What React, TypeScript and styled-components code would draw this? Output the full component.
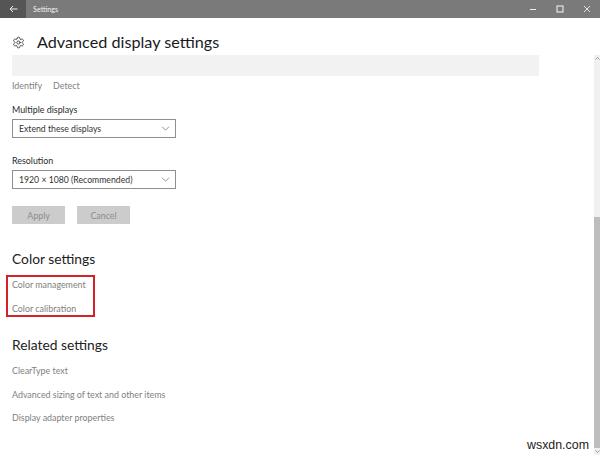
import React from "react";
import styled, { createGlobalStyle } from "styled-components";
import { Settings } from "lucide-react";

const Global = createGlobalStyle`
  html, body { margin: 0; padding: 0; background: #fff; }
  body { width: 600px; height: 455px; overflow: hidden; font-family: Lato, "Noto Sans", sans-serif; }
`;

const Win = styled.div`
  width: 600px; height: 455px; display: flex; flex-direction: column; background: #fff; position: relative; overflow: hidden;
`;
const TitleBar = styled.div`
  height: 18px; background: #7a7a7a; display: flex; align-items: center; color: #f2f2f2; flex: none;
`;
const BackBtn = styled.div`
  width: 26px; height: 18px; background: #555; display: flex; align-items: center; justify-content: center;
`;
const TitleText = styled.span`
  font-size: 7.2px; margin-left: 7px; flex: 1;
`;
const WinBtn = styled.div`
  width: 27px; height: 18px; display: flex; align-items: center; justify-content: center;
`;
const Body = styled.div`
  flex: 1; display: flex; min-height: 0;
`;
const Content = styled.div`
  flex: 1; padding: 0 0 0 12px; display: flex; flex-direction: column; align-items: flex-start;
`;
const Header = styled.div`
  height: 26px; margin-top: 11px; display: flex; align-items: center; gap: 12px;
`;
const PageTitle = styled.h1`
  margin: 0; font-size: 16.2px; font-weight: 400; color: #1a1a1a; line-height: 1;
`;
const Band = styled.div`
  width: 527px; height: 21px; background: #f2f2f2;
`;
const LinkRow = styled.div`
  display: flex; gap: 11px; margin-top: 2px;
`;
const Link = styled.div`
  font-size: 8.9px; line-height: 14px; padding-top: 1px; color: #808080; white-space: nowrap;
`;
const Label = styled.div<{ $top: number }>`
  font-size: 8.9px; line-height: 14px; padding-top: 1px; color: #2b2b2b; margin-top: ${p => p.$top}px;
`;
const Select = styled.div`
  width: 164px; height: 19px; box-sizing: border-box; margin-top: 2px; border: 1px solid #8f8f8f;
  display: flex; align-items: center; justify-content: space-between; padding: 0 5px 0 6px;
  font-size: 8.7px; color: #333;
`;
const Buttons = styled.div`
  display: flex; gap: 12px; margin-top: 17px;
`;
const Btn = styled.div`
  width: 53px; height: 18px; background: #cccccc; color: #8c8c8c; font-size: 8.9px;
  display: flex; align-items: center; justify-content: center;
`;
const Section = styled.h2<{ $top: number }>`
  margin: ${p => p.$top}px 0 0; font-size: 13.8px; line-height: 18px; font-weight: 400; color: #222;
`;
const HiBox = styled.div`
  margin: 7px 0 0 -6px; padding: 2px 6px; width: 89px; height: 42px; box-sizing: border-box;
  position: relative; display: flex; flex-direction: column; gap: 9px;
`;
const HiFrame = styled.div`
  position: absolute; inset: 0; border: 2px solid #d2232a;
`;
const Links = styled.div`
  display: flex; flex-direction: column; gap: 8.5px; margin-top: 9px;
`;
const Rail = styled.div`
  width: 6px; margin-top: 37px; display: flex; flex-direction: column; align-items: center; background: #f0f0f0; flex: none;
`;
const RailThumb = styled.div`
  margin-top: 155px; flex: 1; width: 100%; background: #bdbdbd;
`;
const RailArrow = styled.svg`
  flex: none; margin: 2px 0;
`;
const Mark = styled.div`
  position: absolute; left: 527px; top: 438px; font-size: 12.4px; line-height: 14px; color: #222; font-family: "Liberation Sans", sans-serif;
`;

const Chevron = () => (
  <svg width="9" height="5" viewBox="0 0 9 5" fill="none" stroke="#777" strokeWidth=".8"><path d="M1 .7l3.500 3.500L8 .7"/></svg>
);

export default function App() {
  return (
    <Win>
      <Global />
      <TitleBar>
        <BackBtn>
          <svg width="9" height="8" viewBox="0 0 9 8" fill="none" stroke="#eee" strokeWidth="1"><path d="M8.500 4H1M4 1 1 4l3 3"/></svg>
        </BackBtn>
        <TitleText>Settings</TitleText>
        <WinBtn><svg width="8" height="8" viewBox="0 0 8 8"><path d="M1 4.500h6" stroke="#eee" strokeWidth="1"/></svg></WinBtn>
        <WinBtn><svg width="8" height="8" viewBox="0 0 8 8" fill="none"><rect x="1" y="1" width="6" height="6" stroke="#e4e4e4" strokeWidth="1.200"/></svg></WinBtn>
        <WinBtn><svg width="8" height="8" viewBox="0 0 8 8"><path d="M1 1l6 6M7 1 1 7" stroke="#eee" strokeWidth=".9"/></svg></WinBtn>
      </TitleBar>
      <Body>
        <Content>
          <Header><Settings size={13} color="#333" strokeWidth={1.6} /><PageTitle>Advanced display settings</PageTitle></Header>
          <Band />
          <LinkRow><Link>Identify</Link><Link>Detect</Link></LinkRow>
          <Label $top={9}>Multiple displays</Label>
          <Select>Extend these displays<Chevron /></Select>
          <Label $top={15}>Resolution</Label>
          <Select>1920 × 1080 (Recommended)<Chevron /></Select>
          <Buttons><Btn>Apply</Btn><Btn>Cancel</Btn></Buttons>
          <Section $top={26}>Color settings</Section>
          <HiBox>
            <HiFrame />
            <Link>Color management</Link>
            <Link>Color calibration</Link>
          </HiBox>
          <Section $top={19}>Related settings</Section>
          <Links>
            <Link>ClearType text</Link>
            <Link>Advanced sizing of text and other items</Link>
            <Link>Display adapter properties</Link>
          </Links>
        </Content>
        <Rail>
          <RailArrow width="5" height="3" viewBox="0 0 5 3" fill="none" stroke="#777" strokeWidth=".7"><path d="M.5 2.500 2.500.5l2 2"/></RailArrow>
          <RailThumb />
          <RailArrow width="5" height="3" viewBox="0 0 5 3" fill="none" stroke="#777" strokeWidth=".7"><path d="M.5.5l2 2 2-2"/></RailArrow>
        </Rail>
      </Body>
      <Mark>wsxdn.com</Mark>
    </Win>
  );
}
